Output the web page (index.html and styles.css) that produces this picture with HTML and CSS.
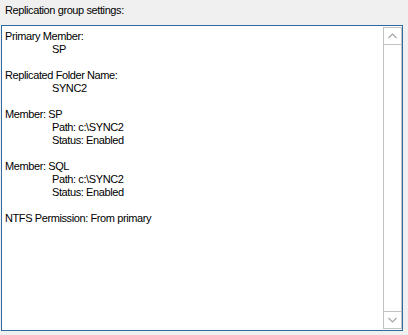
FILE: index.html
```html
<!DOCTYPE html>
<html>
<head>
<meta charset="utf-8">
<link rel="stylesheet" href="styles.css">
</head>
<body>
<div class="label">Replication group settings:</div>
<div class="box">
  <div class="content">
    <div class="line">Primary Member:</div>
    <div class="line indent">SP</div>
    <div class="line blank"></div>
    <div class="line">Replicated Folder Name:</div>
    <div class="line indent">SYNC2</div>
    <div class="line blank"></div>
    <div class="line">Member: SP</div>
    <div class="line indent">Path: c:\SYNC2</div>
    <div class="line indent">Status: Enabled</div>
    <div class="line blank"></div>
    <div class="line">Member: SQL</div>
    <div class="line indent">Path: c:\SYNC2</div>
    <div class="line indent">Status: Enabled</div>
    <div class="line blank"></div>
    <div class="line">NTFS Permission: From primary</div>
  </div>
  <div class="scrollbar">
    <div class="btn up">
      <svg width="9" height="6" viewBox="0 0 9 6"><path d="M0.5 5 L4.5 1 L8.5 5" fill="none" stroke="#a6a6a6" stroke-width="1.2"/></svg>
    </div>
    <div class="track"></div>
    <div class="btn down">
      <svg width="9" height="6" viewBox="0 0 9 6"><path d="M0.5 1 L4.5 5 L8.5 1" fill="none" stroke="#a6a6a6" stroke-width="1.2"/></svg>
    </div>
  </div>
</div>
</body>
</html>
```
FILE: styles.css
```css
html, body {
  margin: 0;
  padding: 0;
  background: #f0f0f0;
  font-family: "Liberation Sans", Arial, sans-serif;
  font-size: 11px;
  letter-spacing: -0.4px;
  color: #000;
}
.label {
  height: 25px;
  line-height: 21px;
  padding-left: 5px;
  box-sizing: border-box;
}
.box {
  margin-left: 1px;
  width: 402px;
  height: 306px;
  box-sizing: border-box;
  border: 1px solid #2f6aa3;
  background: #fff;
  display: flex;
}
.content {
  flex: 1;
  padding: 4px 0 0 3px;
}
.line {
  height: 13px;
  line-height: 13px;
  white-space: pre;
}
.indent {
  padding-left: 47px;
}
.scrollbar {
  width: 17px;
  margin: 1px 0 1px 0;
  border: 1px solid #c2c2c2;
  display: flex;
  flex-direction: column;
  background: #fff;
}
.btn {
  height: 16px;
  display: flex;
  align-items: center;
  justify-content: center;
}
.btn.up { border-bottom: 1px solid #c2c2c2; }
.btn.down { border-top: 1px solid #c2c2c2; }
.track { flex: 1; }
```
